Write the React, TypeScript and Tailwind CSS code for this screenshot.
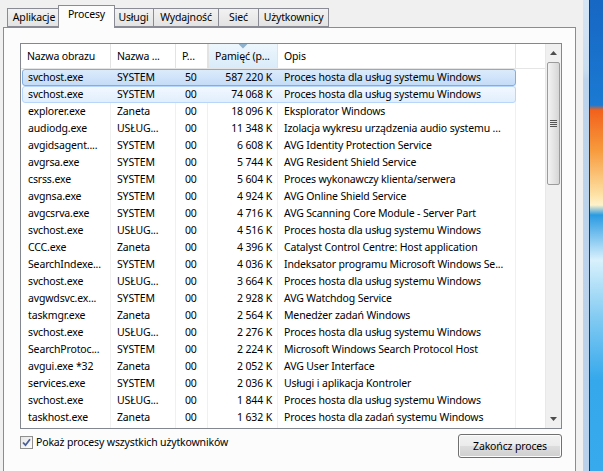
const tabs = [
  { label: "Aplikacje", w: "w-[54px]" },
  { label: "Procesy", w: "w-[57px]" },
  { label: "Usługi", w: "w-[41px]" },
  { label: "Wydajność", w: "w-[66px]" },
  { label: "Sieć", w: "w-[41px]" },
  { label: "Użytkownicy", w: "w-[71px]" },
];

const rows: [string, string, string, string, string][] = [
  ["svchost.exe", "SYSTEM", "50", "587 220 K", "Proces hosta dla usług systemu Windows"],
  ["svchost.exe", "SYSTEM", "00", "74 068 K", "Proces hosta dla usług systemu Windows"],
  ["explorer.exe", "Zaneta", "00", "18 096 K", "Eksplorator Windows"],
  ["audiodg.exe", "USŁUG...", "00", "11 348 K", "Izolacja wykresu urządzenia audio systemu ..."],
  ["avgidsagent....", "SYSTEM", "00", "6 608 K", "AVG Identity Protection Service"],
  ["avgrsa.exe", "SYSTEM", "00", "5 744 K", "AVG Resident Shield Service"],
  ["csrss.exe", "SYSTEM", "00", "5 604 K", "Proces wykonawczy klienta/serwera"],
  ["avgnsa.exe", "SYSTEM", "00", "4 924 K", "AVG Online Shield Service"],
  ["avgcsrva.exe", "SYSTEM", "00", "4 716 K", "AVG Scanning Core Module - Server Part"],
  ["svchost.exe", "USŁUG...", "00", "4 516 K", "Proces hosta dla usług systemu Windows"],
  ["CCC.exe", "Zaneta", "00", "4 396 K", "Catalyst Control Centre: Host application"],
  ["SearchIndexe...", "SYSTEM", "00", "4 036 K", "Indeksator programu Microsoft Windows Se..."],
  ["svchost.exe", "USŁUG...", "00", "3 664 K", "Proces hosta dla usług systemu Windows"],
  ["avgwdsvc.ex...", "SYSTEM", "00", "2 928 K", "AVG Watchdog Service"],
  ["taskmgr.exe", "Zaneta", "00", "2 564 K", "Menedżer zadań Windows"],
  ["svchost.exe", "USŁUG...", "00", "2 276 K", "Proces hosta dla usług systemu Windows"],
  ["SearchProtoc...", "SYSTEM", "00", "2 224 K", "Microsoft Windows Search Protocol Host"],
  ["avgui.exe *32", "Zaneta", "00", "2 052 K", "AVG User Interface"],
  ["services.exe", "SYSTEM", "00", "2 036 K", "Usługi i aplikacja Kontroler"],
  ["svchost.exe", "USŁUG...", "00", "1 844 K", "Proces hosta dla usług systemu Windows"],
  ["taskhost.exe", "Zaneta", "00", "1 632 K", "Proces hosta dla zadań systemu Windows"],
];

const cols = "grid grid-cols-[90px_65px_32px_70px_238px_29px]";

function Tabs() {
  return (
    <div className="flex h-[27px] items-end pl-[4px]">
      {tabs.map((t, i) =>
        i === 1 ? (
          <div
            key={t.label}
            className={`relative z-10 -mx-[2px] -mb-px flex h-[23px] ${t.w} items-start justify-center border border-b-0 border-[#898c95] bg-[#fcfcfc] pt-[3px]`}
          >
            {t.label}
          </div>
        ) : (
          <div
            key={t.label}
            className={`-mr-px flex h-[19px] ${t.w} items-center justify-center border border-[#898c95] bg-[linear-gradient(#f2f2f2,#e3e3e3)]`}
          >
            {t.label}
          </div>
        )
      )}
    </div>
  );
}

function HeaderCell({ label, sorted, last }: { label: string; sorted?: boolean; last?: boolean }) {
  return (
    <div
      className={`relative flex h-[24px] items-center px-[6px] ${last ? "" : "border-r border-[#e3e3e3]"} ${
        sorted ? "border-l border-[#c3d9ec] bg-[linear-gradient(#eef6fd,#d9ecf9)]" : "bg-white"
      }`}
    >
      {sorted && (
        <svg className="absolute left-1/2 top-0 -translate-x-1/2" width="9" height="5" viewBox="0 0 9 5">
          <path d="M0 0h9L4.5 4.5z" fill="#8fb2cf" />
        </svg>
      )}
      <span className="whitespace-nowrap">{label}</span>
    </div>
  );
}

function Scrollbar() {
  return (
    <div className="flex w-[16px] flex-col border-l border-[#e8e8e8] bg-[#f0f0f0]">
      <div className="flex h-[18px] items-center justify-center">
        <svg width="7" height="4" viewBox="0 0 7 4">
          <path d="M0 4L3.5 0 7 4z" fill="#4d4d4d" />
        </svg>
      </div>
      <div className="mx-[1px] flex h-[123px] items-center justify-center rounded-[2px] border border-[#9b9b9b] bg-[linear-gradient(90deg,#f3f3f3,#e2e2e2_60%,#d6d6d6)]">
        <div className="flex flex-col gap-[1px]">
          <div className="h-px w-[7px] bg-[#555]" />
          <div className="h-px w-[7px] bg-[#555]" />
          <div className="h-px w-[7px] bg-[#555]" />
          <div className="h-px w-[7px] bg-[#555]" />
        </div>
      </div>
      <div className="flex-1" />
      <div className="flex h-[18px] items-center justify-center">
        <svg width="7" height="4" viewBox="0 0 7 4">
          <path d="M0 0h7L3.5 4z" fill="#4d4d4d" />
        </svg>
      </div>
    </div>
  );
}

function ProcessList() {
  return (
    <div className="flex h-[386px] w-[542px] border border-[#828790] bg-white">
      <div className="flex flex-1 flex-col overflow-hidden">
        <div className={`${cols} border-b border-[#e5e5e5]`}>
          <HeaderCell label="Nazwa obrazu" />
          <HeaderCell label="Nazwa ..." />
          <HeaderCell label="P..." />
          <HeaderCell label="Pamięć (p..." sorted />
          <HeaderCell label="Opis" />
          <HeaderCell label="" last />
        </div>
        <div className="relative flex-1">
          {/* column guide lines */}
          <div className={`${cols} pointer-events-none absolute inset-0`}>
            {[0, 1, 2, 3, 4, 5].map((i) => (
              <div key={i} className={i < 5 ? "border-r border-[#f0f0f0]" : ""} />
            ))}
          </div>
          {rows.map((r, i) => (
            <div key={i} className={`relative ${cols} h-[17px] items-center leading-[15px]`}>
              {i === 0 && (
                <div className="absolute inset-y-0 left-[1px] w-[494px] rounded-[3px] border border-[#84acdd] bg-[linear-gradient(#dcebfc,#c4dcf7)]" />
              )}
              {i === 1 && (
                <div className="absolute inset-y-0 left-[1px] w-[494px] rounded-[3px] border border-[#b8d6fb] bg-[linear-gradient(#f2f8ff,#e1eefd)]" />
              )}
              <div className="relative overflow-hidden whitespace-nowrap pl-[7px]">{r[0]}</div>
              <div className="relative overflow-hidden whitespace-nowrap pl-[6px]">{r[1]}</div>
              <div className="relative overflow-hidden whitespace-nowrap pl-[9px]">{r[2]}</div>
              <div className="relative overflow-hidden whitespace-nowrap pr-[6px] text-right">{r[3]}</div>
              <div className="relative overflow-hidden whitespace-nowrap pl-[6px]">{r[4]}</div>
              <div />
            </div>
          ))}
        </div>
      </div>
      <Scrollbar />
    </div>
  );
}

export default function App() {
  return (
    <div className="flex h-[471px] w-[603px] overflow-hidden font-['Noto_Sans',sans-serif] text-[10.5px] leading-none tracking-[-0.15px] text-black">
      <div className="flex w-[583px] flex-col bg-[#f0f0f0] pl-[3px]">
        <Tabs />
        <div className="flex w-[573px] flex-1 flex-col border border-b-0 border-[#898c95] bg-[#fcfcfc] pl-[16px] pt-[15px]">
          <ProcessList />
          <div className="mt-[5px] flex w-[542px] items-start justify-between">
            <label className="mt-[1px] flex items-center gap-[3px]">
              <span className="flex h-[13px] w-[13px] items-center justify-center border border-[#8f8f8f] bg-[linear-gradient(135deg,#e6e6e6,#fdfdfd)]">
                <svg width="9" height="9" viewBox="0 0 9 9">
                  <path d="M1 4.5l2.5 2.7L8 1.2" fill="none" stroke="#4a5f97" strokeWidth="1.8" />
                </svg>
              </span>
              <span className="leading-[15px]">Pokaż procesy wszystkich użytkowników</span>
            </label>
            <button className="flex h-[24px] w-[104px] items-center justify-center rounded-[3px] border border-[#707070] bg-[linear-gradient(#f2f2f2_0%,#ebebeb_50%,#dddddd_51%,#cfcfcf_100%)] leading-[15px] shadow-[inset_0_0_0_1px_#fcfcfc]">
              Zakończ proces
            </button>
          </div>
        </div>
      </div>
      <div className="w-[6px] bg-[linear-gradient(#d6e6f5_0px,#c9ddf1_70px,#bcd4ec_80px,#b9d1ea_471px)]" />
      <div className="w-px bg-[#1d3a5f]" />
      <div className="flex-1 bg-[linear-gradient(180deg,#1767c4_0px,#1b7ad3_105px,#f2611c_110px,#f79a3c_150px,#fde2a6_195px,#fef2cc_205px,#2a9be2_215px,#d8f1fc_260px,#7fc9f2_320px,#35a8ec_380px,#36aaed_471px)]" />
    </div>
  );
}
